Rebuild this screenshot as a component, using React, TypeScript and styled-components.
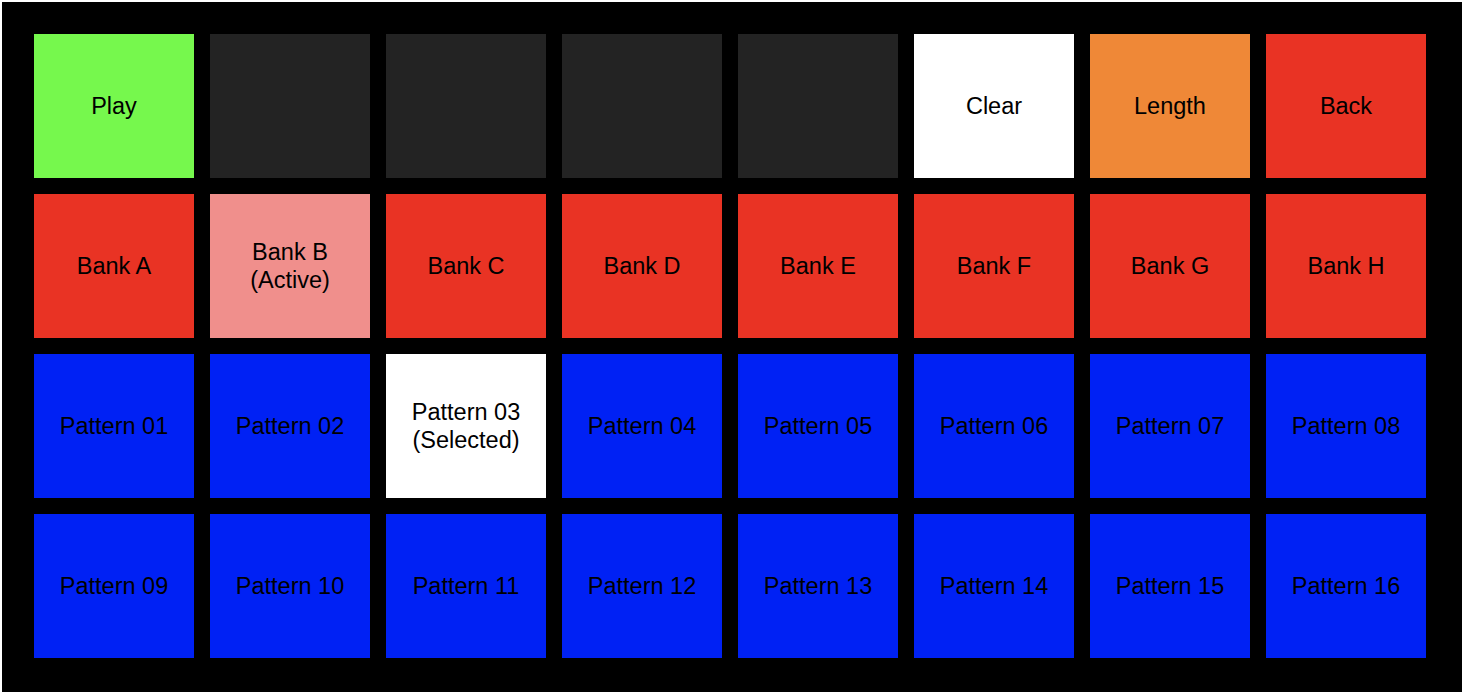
import styled, { createGlobalStyle } from 'styled-components';

const GlobalStyle = createGlobalStyle`
  html, body {
    margin: 0;
    background: #fff;
    overflow: hidden;
  }

  #root {
    padding: 2px 0 0 2px;
  }
`;

type PadColor = 'green' | 'dark' | 'white' | 'orange' | 'red' | 'pink' | 'blue';

const padColors: Record<PadColor, string> = {
  green: '#76f84d',
  dark: '#232323',
  white: '#ffffff',
  orange: '#ef8837',
  red: '#e93324',
  pink: '#f08f8c',
  blue: '#0021f4',
};

const StyledBoard = styled.main`
  width: 1460px;
  height: 690px;
  box-sizing: border-box;
  padding: 32px;

  background-color: #000;
`;

const StyledGrid = styled.div`
  display: grid;
  grid-template-columns: repeat(8, 160px);
  grid-auto-rows: 144px;
  gap: 16px;
`;

const StyledPad = styled.button<{ $color: PadColor }>`
  display: flex;
  align-items: center;
  justify-content: center;
  padding: 0;

  border: none;
  background-color: ${({ $color }) => padColors[$color]};
  color: #000;

  font-family: 'Liberation Sans', Arial, sans-serif;
  font-size: 23.5px;
  line-height: 28px;
  text-align: center;
  white-space: pre-line;
`;

type Pad = { label: string; color: PadColor };

const topRow: Pad[] = [
  { label: 'Play', color: 'green' },
  { label: '', color: 'dark' },
  { label: '', color: 'dark' },
  { label: '', color: 'dark' },
  { label: '', color: 'dark' },
  { label: 'Clear', color: 'white' },
  { label: 'Length', color: 'orange' },
  { label: 'Back', color: 'red' },
];

const banks: Pad[] = 'ABCDEFGH'.split('').map(letter =>
  letter === 'B'
    ? { label: 'Bank B\n(Active)', color: 'pink' }
    : { label: `Bank ${letter}`, color: 'red' },
);

const patterns: Pad[] = Array.from({ length: 16 }, (_, i) => {
  const num = String(i + 1).padStart(2, '0');
  return i === 2
    ? { label: `Pattern ${num}\n(Selected)`, color: 'white' }
    : { label: `Pattern ${num}`, color: 'blue' };
});

const pads = [...topRow, ...banks, ...patterns];

const App = () => {
  return (
    <>
      <GlobalStyle />
      <StyledBoard>
        <StyledGrid>
          {pads.map((pad, i) => (
            <StyledPad key={i} type="button" $color={pad.color}>
              {pad.label}
            </StyledPad>
          ))}
        </StyledGrid>
      </StyledBoard>
    </>
  );
};

export default App;
